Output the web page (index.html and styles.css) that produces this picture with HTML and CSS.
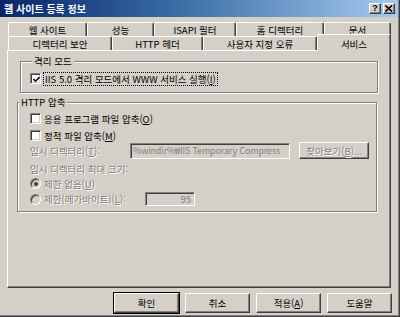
FILE: index.html
```html
<!DOCTYPE html>
<html lang="ko">
<head>
<meta charset="utf-8">
<title>웹 사이트 등록 정보</title>
<link rel="stylesheet" href="styles.css">
</head>
<body>
<div class="window">
  <div class="titlebar">
    <span class="title">웹 사이트 등록 정보</span>
    <div class="tb-buttons">
      <span class="tb-btn">?</span>
      <span class="tb-btn"><svg width="8" height="7" viewBox="0 0 8 7"><path d="M0.5 0.5 L7 6.5 M7 0.5 L0.5 6.5" stroke="#000" stroke-width="1.6"/></svg></span>
    </div>
  </div>
  <div class="client">
    <div class="tabrow">
      <div class="tab t1">웹 사이트</div>
      <div class="tab t2">성능</div>
      <div class="tab t3">ISAPI 필터</div>
      <div class="tab t4">홈 디렉터리</div>
      <div class="tab t5">문서</div>
    </div>
    <div class="tabrow">
      <div class="tab t6">디렉터리 보안</div>
      <div class="tab t7">HTTP 헤더</div>
      <div class="tab t8">사용자 지정 오류</div>
      <div class="tab t9 selected">서비스</div>
    </div>
    <div class="panel">
      <div class="group g1">
        <span class="legend">격리 모드</span>
        <div class="row r-iso">
          <span class="check"><svg width="7" height="7" viewBox="0 0 7 7"><path d="M0.5 3 L2.6 5.2 L6.6 1" fill="none" stroke="#000" stroke-width="1.6"/></svg></span>
          <span class="label focus">IIS 5.0 격리 모드에서 WWW 서비스 실행(<u>I</u>)</span>
        </div>
      </div>
      <div class="group g2">
        <span class="legend">HTTP 압축</span>
        <div class="row r-cb1">
          <span class="check"></span>
          <span class="label">응용 프로그램 파일 압축(<u>O</u>)</span>
        </div>
        <div class="row r-cb2">
          <span class="check"></span>
          <span class="label">정적 파일 압축(<u>M</u>)</span>
        </div>
        <div class="row r-dir">
          <span class="label disabled lbl-dir">임시 디렉터리(<u>T</u>):</span>
          <span class="field dir-field">%windir%₩IIS Temporary Compress</span>
          <span class="button small disabled-btn">찾아보기(<u>B</u>)...</span>
        </div>
        <div class="row r-max">
          <span class="label disabled">임시 디렉터리 최대 크기:</span>
        </div>
        <div class="row r-rad1">
          <span class="radio on"></span>
          <span class="label disabled">제한 없음(<u>U</u>)</span>
        </div>
        <div class="row r-rad2">
          <span class="radio"></span>
          <span class="label disabled lbl-limit">제한(메가바이트)(<u>L</u>):</span>
          <span class="field num-field">95</span>
        </div>
      </div>
    </div>
    <div class="buttons">
      <span class="button default">확인</span>
      <span class="button">취소</span>
      <span class="button">적용(<u>A</u>)</span>
      <span class="button">도움말</span>
    </div>
  </div>
</div>
</body>
</html>
```
FILE: styles.css
```css
* { box-sizing: border-box; }
html, body { margin: 0; padding: 0; background: #d4d0c8; }
body {
  font-family: "Noto Sans CJK KR", "Noto Sans", sans-serif;
  font-size: 9.5px;
  color: #000;
}
.window {
  width: 400px;
  height: 317px;
  background: #d4d0c8;
  border-right: 1px solid #404040;
  border-bottom: 1px solid #404040;
  box-shadow: inset -1px -1px #808080;
  display: flex;
  flex-direction: column;
  overflow: hidden;
}
.titlebar {
  height: 17px;
  margin-right: 1px;
  display: flex;
  align-items: center;
  justify-content: space-between;
  padding: 0 3px 0 4px;
  background: linear-gradient(90deg, #0a246a 0%, #3a6ea5 45%, #a6caf0 100%);
  color: #fff;
  font-weight: bold;
  font-size: 10px;
}
.title { line-height: 17px; }
.tb-buttons { display: flex; gap: 2px; }
.tb-btn {
  width: 12px;
  height: 11px;
  background: #d4d0c8;
  border: 1px solid;
  border-color: #fff #404040 #404040 #fff;
  box-shadow: inset -1px -1px #808080;
  color: #000;
  font-size: 9px;
  font-weight: bold;
  font-family: "Liberation Sans", sans-serif;
  display: flex;
  align-items: center;
  justify-content: center;
  line-height: 1;
}
.client {
  flex: 1;
  padding: 5px 7px 0 7px;
  display: flex;
  flex-direction: column;
}
.tabrow {
  display: flex;
  align-items: flex-end;
  height: 14px;
  padding-left: 1px;
}
.tab {
  height: 14px;
  border-top: 1px solid #fff;
  border-left: 1px solid #fff;
  border-right: 1px solid #404040;
  box-shadow: inset -1px 0 #808080;
  border-radius: 2px 2px 0 0;
  display: flex;
  align-items: center;
  justify-content: center;
  line-height: 12px;
  white-space: nowrap;
}
.t1 { width: 79px; }
.t2 { width: 67px; }
.t3 { width: 82px; }
.t4 { width: 88px; }
.t5 { width: 67px; }
.t6 { width: 104px; }
.t7 { width: 91px; }
.t8 { width: 114px; }
.t9 { width: 74px; }
.tab.selected {
  height: 17px;
  margin-bottom: -1px;
  padding-top: 2px;
  padding-bottom: 1px;
  background: #d4d0c8;
  position: relative;
  z-index: 1;
}
.panel {
  height: 238px;
  border-top: 1px solid #fff;
  border-left: 1px solid #fff;
  border-right: 1px solid #404040;
  border-bottom: 1px solid #404040;
  box-shadow: inset -1px -1px #808080;
  padding-top: 10px;
  margin-right: 1px;
}
.group {
  border: 1px solid #808080;
  box-shadow: 1px 1px #fff, inset 1px 1px #fff;
}
.g1 {
  margin: 0 12px 0 12px;
  padding: 0 0 7px 9px;
}
.g2 {
  margin: 9px 13px 0 9px;
  padding: 0 0 5px 12px;
}
.legend {
  display: table;
  margin: -7px 0 0 3px;
  padding: 0 2px;
  background: #d4d0c8;
  line-height: 12px;
  height: 12px;
}
.g1 .legend { margin-left: 2px; }
.g2 .legend { margin-left: -11px; }
.row {
  display: flex;
  align-items: center;
  height: 13px;
  white-space: nowrap;
}
.label { line-height: 12px; }
.r-iso { margin-top: 5px; }
.r-cb1 { margin-top: 4px; }
.r-cb2 { margin-top: 4px; }
.r-dir { height: 17px; margin-top: 0; }
.r-max { margin-top: 3px; }
.r-rad1 { margin-top: 2px; }
.r-rad2 { height: 14px; margin-top: 2px; }
.check {
  width: 11px;
  height: 11px;
  flex: none;
  margin-right: 3px;
  background: #fff;
  border: 1px solid;
  border-color: #808080 #fff #fff #808080;
  box-shadow: inset 1px 1px #404040, inset -1px -1px #d4d0c8;
  display: flex;
  align-items: center;
  justify-content: center;
}
.check svg { margin-left: 1px; margin-top: 1px; }
.focus {
  outline: 1px dotted #000;
  outline-offset: 0;
  padding: 0 1px;
}
.radio {
  width: 11px;
  height: 11px;
  flex: none;
  margin-right: 3px;
  border-radius: 50%;
  background: #d4d0c8;
  border: 1px solid;
  border-color: #808080 #fff #fff #808080;
  box-shadow: inset 1px 1px #404040;
  display: flex;
  align-items: center;
  justify-content: center;
}
.radio.on::after {
  content: "";
  width: 4px;
  height: 4px;
  border-radius: 50%;
  background: #404040;
}
.disabled {
  color: #808080;
  text-shadow: 1px 1px #fff;
}
.lbl-dir { width: 100px; flex: none; }
.lbl-limit { width: 101px; flex: none; }
.field {
  height: 16px;
  border: 1px solid;
  border-color: #808080 #fff #fff #808080;
  box-shadow: inset 1px 1px #404040, inset -1px -1px #d4d0c8;
  background: #d4d0c8;
  color: #808080;
  padding: 0 3px;
  line-height: 14px;
  overflow: hidden;
  white-space: nowrap;
}
.dir-field {
  width: 160px;
  padding: 0 2px;
  font-size: 9px;
  letter-spacing: -0.15px;
}
.num-field { width: 50px; height: 14px; line-height: 12px; text-align: right; }
.button {
  width: 65px;
  height: 20px;
  flex: none;
  border: 1px solid;
  border-color: #fff #404040 #404040 #fff;
  box-shadow: inset -1px -1px #808080;
  display: flex;
  align-items: center;
  justify-content: center;
  line-height: 12px;
  white-space: nowrap;
}
.button.small {
  width: 70px;
  height: 17px;
  margin-left: 9px;
}
.disabled-btn {
  color: #808080;
  text-shadow: 1px 1px #fff;
}
.button.default {
  outline: 1px solid #000;
  outline-offset: 0;
}
.buttons {
  display: flex;
  justify-content: flex-end;
  gap: 6px;
  margin-top: 5px;
  padding-right: 0;
}
```
